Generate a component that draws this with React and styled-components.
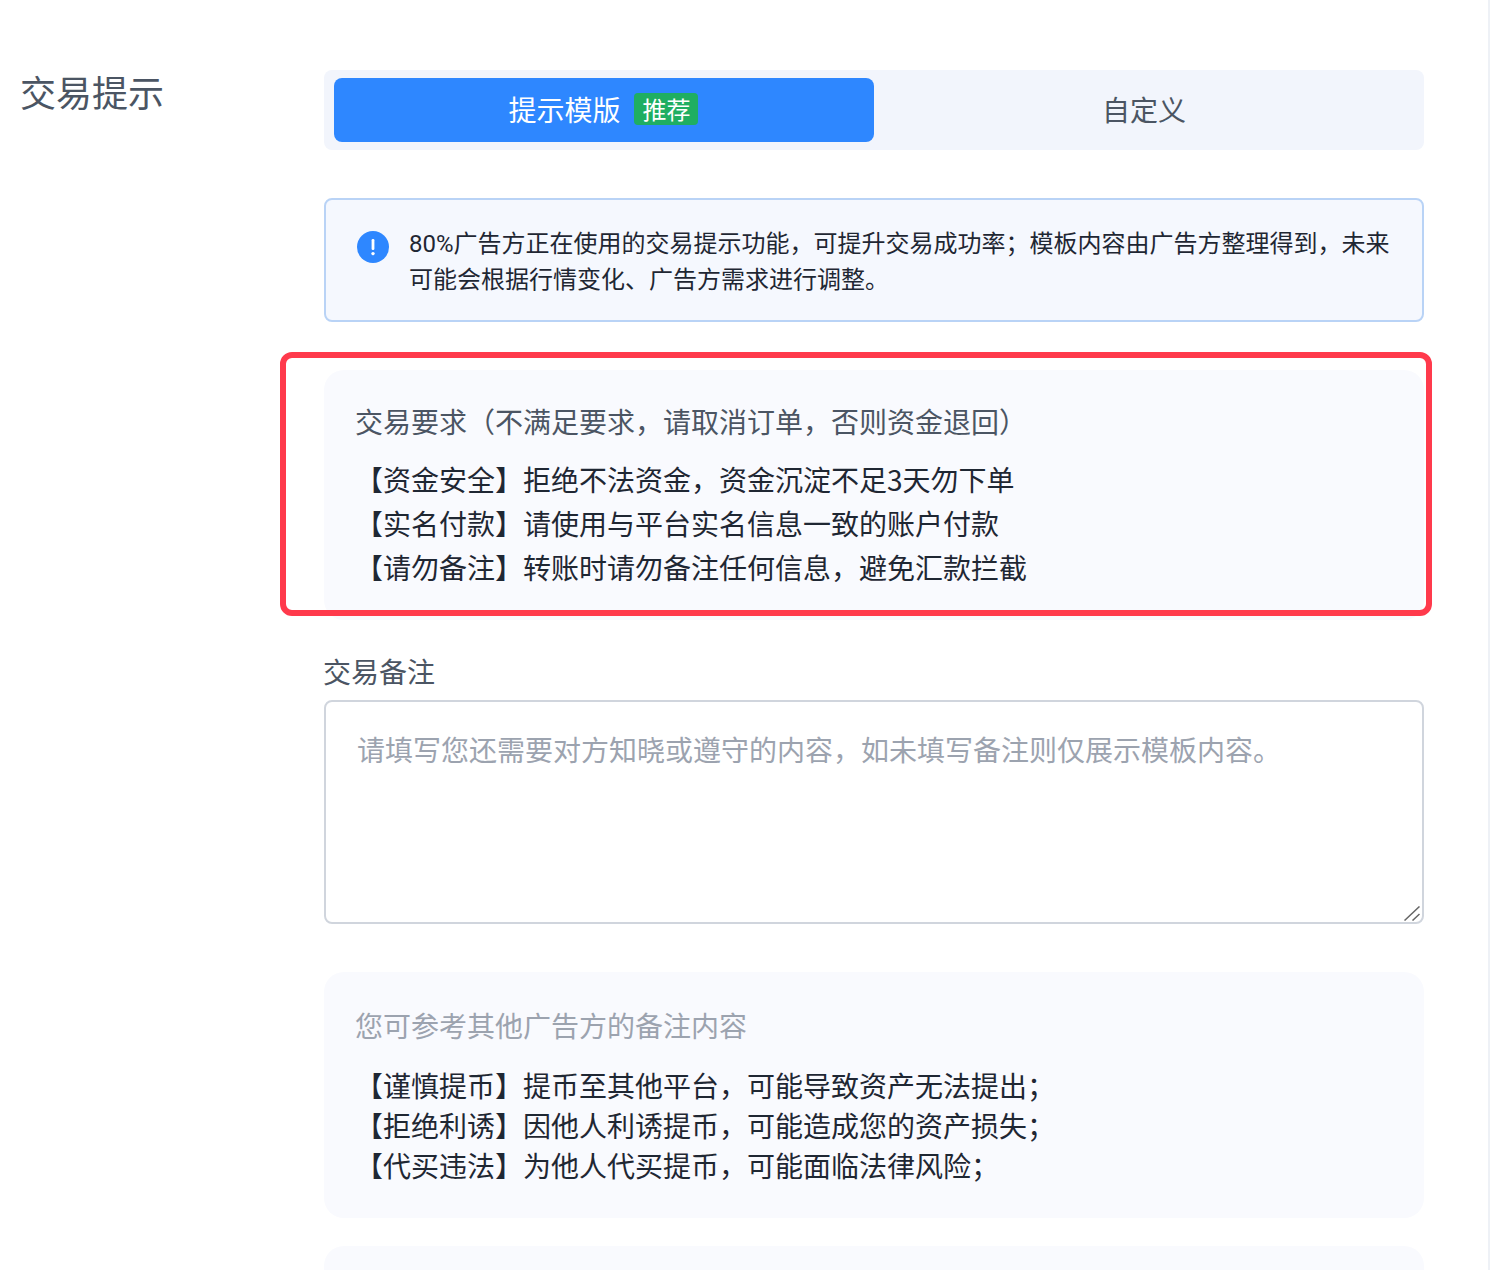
import React from 'react'
import styled, { createGlobalStyle } from 'styled-components'

const GlobalStyle = createGlobalStyle`
  html, body {
    margin: 0;
    background: #fff;
    overflow: hidden;
  }
  * {
    box-sizing: border-box;
  }
  body {
    font-family: "Noto Sans CJK SC", "Noto Sans", sans-serif;
  }
`

const App = () => (
  <>
    <GlobalStyle />
    <Page>
      <Section>
        <SideLabel>交易提示</SideLabel>
        <Main>
          <Segment>
            <SegmentButton $active>
              提示模版
              <Badge>推荐</Badge>
            </SegmentButton>
            <SegmentButton>自定义</SegmentButton>
          </Segment>

          <Notice>
            <NoticeIcon viewBox="0 0 32 32">
              <circle cx="16" cy="16" r="16" fill="#2e87ff" />
              <rect x="14.6" y="8" width="2.8" height="11" rx="1.2" fill="#fff" />
              <circle cx="16" cy="22.6" r="1.7" fill="#fff" />
            </NoticeIcon>
            <NoticeText>
              80%广告方正在使用的交易提示功能，可提升交易成功率；模板内容由广告方整理得到，未来可能会根据行情变化、广告方需求进行调整。
            </NoticeText>
          </Notice>

          <RequireCard>
            <CardTitle>交易要求（不满足要求，请取消订单，否则资金退回）</CardTitle>
            <RuleList $lineHeight={44} $gap={16}>
              <li>【资金安全】拒绝不法资金，资金沉淀不足3天勿下单</li>
              <li>【实名付款】请使用与平台实名信息一致的账户付款</li>
              <li>【请勿备注】转账时请勿备注任何信息，避免汇款拦截</li>
            </RuleList>
            <Highlight />
          </RequireCard>

          <FieldLabel>交易备注</FieldLabel>
          <RemarkBox>
            <Remark placeholder="请填写您还需要对方知晓或遵守的内容，如未填写备注则仅展示模板内容。" />
            <ResizeGrip viewBox="0 0 16 15">
              <path d="M0.5 14.5 L15.5 0.5 M8.5 14.5 L15.5 8" />
            </ResizeGrip>
          </RemarkBox>

          <ReferCard>
            <CardTitle $muted>您可参考其他广告方的备注内容</CardTitle>
            <RuleList $lineHeight={40} $gap={20}>
              <li>【谨慎提币】提币至其他平台，可能导致资产无法提出；</li>
              <li>【拒绝利诱】因他人利诱提币，可能造成您的资产损失；</li>
              <li>【代买违法】为他人代买提币，可能面临法律风险；</li>
            </RuleList>
          </ReferCard>

          <NextCard />
        </Main>
      </Section>
    </Page>
  </>
)

export default App

const Page = styled.div`
  width: 1490px;
  height: 1270px;
  overflow: hidden;
  border-right: 2px solid #eef1f6;
  padding-top: 70px;
`

const Section = styled.div`
  display: flex;
  align-items: flex-start;
`

const SideLabel = styled.div`
  width: 324px;
  padding-left: 20px;
  font-size: 36px;
  line-height: 42px;
  color: #4b5563;
`

const Main = styled.div`
  width: 1100px;
  flex-shrink: 0;
  display: flex;
  flex-direction: column;
`

const Segment = styled.div`
  display: flex;
  height: 80px;
  padding: 8px 10px;
  background: #f2f5fc;
  border-radius: 8px;
`

const SegmentButton = styled.div`
  flex: 0 0 540px;
  display: flex;
  align-items: center;
  justify-content: center;
  gap: 13px;
  padding: 0 ${props => (props.$active ? 2 : 0)}px 2px 0;
  font-size: 28px;
  border-radius: 8px;
  color: ${props => (props.$active ? '#fff' : '#4b5563')};
  background: ${props => (props.$active ? '#2e87ff' : 'transparent')};
`

const Badge = styled.span`
  display: block;
  width: 64px;
  height: 32px;
  padding-left: 2px;
  line-height: 32px;
  text-align: center;
  font-size: 24px;
  color: #fff;
  background: #1fae62;
  border-radius: 4px;
`

const Notice = styled.div`
  display: flex;
  align-items: flex-start;
  gap: 20px;
  height: 124px;
  margin-top: 48px;
  padding: 26px 20px 0 31px;
  background: #f5f8fe;
  border: 2px solid #b9d3f6;
  border-radius: 8px;
`

const NoticeIcon = styled.svg`
  flex-shrink: 0;
  width: 32px;
  height: 32px;
  margin-top: 5px;
`

const NoticeText = styled.p`
  margin: 0;
  font-family: Roboto, "Noto Sans CJK SC", sans-serif;
  font-size: 24px;
  line-height: 36px;
  color: #1f2733;
`

const Card = styled.div`
  position: relative;
  background: #f9fafe;
  border-radius: 20px;
  padding: 0 31px;
`

const RequireCard = styled(Card)`
  height: 250px;
  margin-top: 48px;
  padding-top: 31px;
`

const ReferCard = styled(Card)`
  height: 246px;
  margin-top: 48px;
  padding-top: 33px;
`

const NextCard = styled(Card)`
  height: 120px;
  margin-top: 28px;
  flex-shrink: 0;
`

const CardTitle = styled.div`
  font-size: 28px;
  line-height: 40px;
  color: ${props => (props.$muted ? '#9ca3af' : '#4b5563')};
`

const RuleList = styled.ul`
  list-style: none;
  margin: ${props => props.$gap}px 0 0;
  padding: 0;
  font-size: 28px;
  line-height: ${props => props.$lineHeight}px;
  color: #1f2733;
`

const Highlight = styled.div`
  position: absolute;
  top: -18px;
  left: -44px;
  right: -8px;
  bottom: 4px;
  border: 6px solid #ff3a4c;
  border-radius: 12px;
  pointer-events: none;
`

const FieldLabel = styled.div`
  margin: 31px 0 0 -1px;
  font-size: 28px;
  line-height: 40px;
  color: #4b5563;
`

const RemarkBox = styled.div`
  position: relative;
  flex-shrink: 0;
  height: 224px;
  margin-top: 9px;
`

const Remark = styled.textarea`
  display: block;
  width: 100%;
  height: 100%;
  padding: 27px 31px;
  font-family: inherit;
  font-size: 28px;
  line-height: 40px;
  background: #fff;
  border: 2px solid #d0d5dd;
  border-radius: 8px;
  outline: none;
  resize: none;

  &::placeholder {
    color: #9ca3af;
    opacity: 1;
  }
`

const ResizeGrip = styled.svg`
  position: absolute;
  right: 4px;
  bottom: 3px;
  width: 16px;
  height: 15px;
  fill: none;
  stroke: #666;
  stroke-width: 1.5;
  pointer-events: none;
`
